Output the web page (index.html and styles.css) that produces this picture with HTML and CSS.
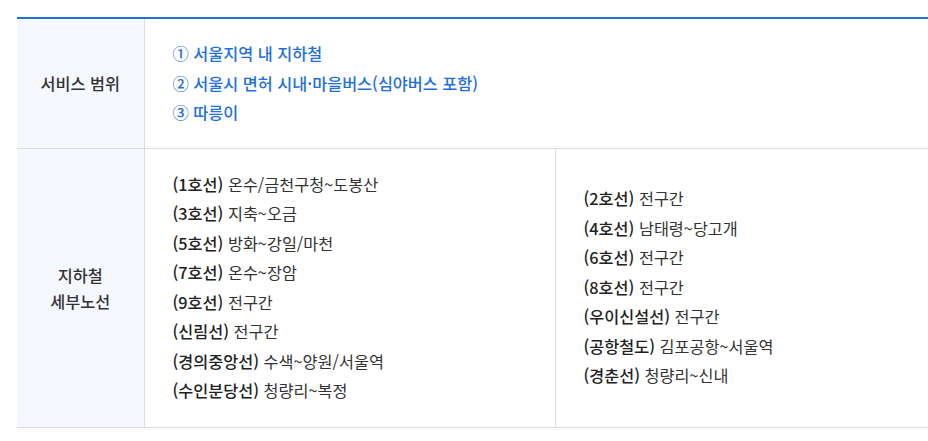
FILE: index.html
```html
<!DOCTYPE html>
<html lang="ko">
<head>
<meta charset="utf-8">
<title>서비스 범위</title>
<link rel="stylesheet" href="styles.css">
</head>
<body>
<div class="wrap">
  <table class="info">
    <colgroup>
      <col class="col-head">
      <col class="col-left">
      <col>
    </colgroup>
    <tbody>
      <tr>
        <th class="head">서비스 범위</th>
        <td class="cell" colspan="2">
          <ul class="list blue">
            <li>① 서울지역 내 지하철</li>
            <li>② 서울시 면허 시내·마을버스(심야버스 포함)</li>
            <li>③ 따릉이</li>
          </ul>
        </td>
      </tr>
      <tr>
        <th class="head">지하철<br>세부노선</th>
        <td class="cell half">
          <ul class="list">
            <li><b>(1호선)</b> 온수/금천구청~도봉산</li>
            <li><b>(3호선)</b> 지축~오금</li>
            <li><b>(5호선)</b> 방화~강일/마천</li>
            <li><b>(7호선)</b> 온수~장암</li>
            <li><b>(9호선)</b> 전구간</li>
            <li><b>(신림선)</b> 전구간</li>
            <li><b>(경의중앙선)</b> 수색~양원/서울역</li>
            <li><b>(수인분당선)</b> 청량리~복정</li>
          </ul>
        </td>
        <td class="cell">
          <ul class="list">
            <li><b>(2호선)</b> 전구간</li>
            <li><b>(4호선)</b> 남태령~당고개</li>
            <li><b>(6호선)</b> 전구간</li>
            <li><b>(8호선)</b> 전구간</li>
            <li><b>(우이신설선)</b> 전구간</li>
            <li><b>(공항철도)</b> 김포공항~서울역</li>
            <li><b>(경춘선)</b> 청량리~신내</li>
          </ul>
        </td>
      </tr>
    </tbody>
  </table>
</div>
</body>
</html>
```
FILE: styles.css
```css
html, body {
  margin: 0;
  padding: 0;
  background: #fff;
}
body {
  font-family: "Noto Sans CJK KR", "Noto Sans", sans-serif;
  color: #333;
}
.wrap {
  padding: 17px 0 0 17px;
}
.info {
  width: 911px;
  border-collapse: collapse;
  border-top: 2px solid #1f6fdc;
  table-layout: fixed;
}
.col-head {
  width: 127px;
}
.col-left {
  width: 411px;
}
.head {
  background: #f5f8fe;
  border-right: 1px solid #dddddd;
  border-bottom: 1px solid #dddddd;
  font-size: 16.3px;
  font-weight: 500;
  line-height: 26px;
  color: #333;
  text-align: center;
  vertical-align: middle;
  padding: 0;
}
.cell {
  border-bottom: 1px solid #dddddd;
  padding: 20px 28px;
  vertical-align: middle;
  text-align: left;
}
.half {
  border-right: 1px solid #dddddd;
  padding-top: 21px;
  padding-bottom: 21px;
}
.list {
  list-style: none;
  margin: 0;
  padding: 0;
  font-size: 16.3px;
  line-height: 29.5px;
  color: #333;
  white-space: nowrap;
}
.list b {
  font-weight: 500;
  color: #222;
}
.blue {
  color: #1f6fdc;
  font-weight: 500;
}
```
